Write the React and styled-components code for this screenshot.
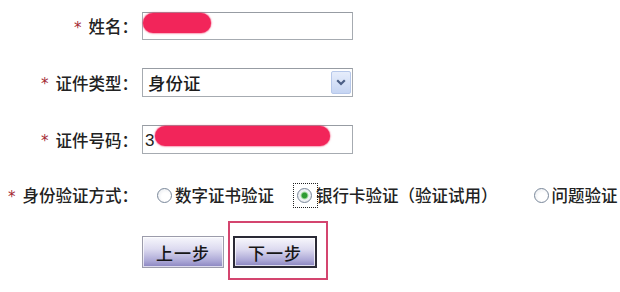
import React from "react";
import styled, { createGlobalStyle } from "styled-components";

const Global = createGlobalStyle`
  html, body { margin: 0; padding: 0; background: #fff; }
  body { font-family: "Noto Sans CJK SC", "Noto Sans", sans-serif; color: #1c1c1c; }
`;

const Form = styled.main`
  display: grid;
  grid-template-columns: 138px auto;
  column-gap: 4px;
  row-gap: 28px;
  align-items: center;
  padding-top: 12px;
  width: 620px;
`;

const Label = styled.label`
  display: flex;
  justify-content: flex-end;
  align-items: center;
  white-space: nowrap;
  font-size: 16.5px;
  font-weight: 500;
  line-height: 20px;
  color: #222;
`;

const Star = styled.span`
  font-family: "DejaVu Sans", sans-serif;
  font-size: 15px;
  line-height: 15px;
  height: 15px;
  padding-top: 4px;
  color: #a42a32;
  margin-right: 7px;
`;

const Field = styled.div`
  box-sizing: border-box;
  width: 211px;
  height: ${(p) => p.$h}px;
  border: 1px solid #a6abb1;
  border-top-color: #979ca3;
  background: #fff;
  display: flex;
  align-items: ${(p) => (p.$top ? "flex-start" : "center")};
  padding-left: ${(p) => p.$pad}px;
  font-size: 17px;
  color: #1c1c1c;
`;

const Digit = styled.span`
  font-family: "Liberation Sans", sans-serif;
  font-size: 17px;
  line-height: 20px;
  align-self: center;
  margin-top: 2px;
`;

const Redact = styled.span`
  display: inline-block;
  flex: none;
  width: ${(p) => p.$w}px;
  height: 20px;
  margin-left: ${(p) => p.$ml}px;
  border-radius: 10px;
  background: #f2255a;
  box-shadow: 0 0 1.5px 0.5px rgba(242, 37, 90, 0.7);
`;

const SelectBox = styled(Field)`
  justify-content: space-between;
`;

const SelectText = styled.span`
  line-height: 22px;
  font-size: 17.5px;
  font-weight: 500;
`;

const DropButton = styled.span`
  box-sizing: border-box;
  width: 20px;
  height: 23px;
  margin-right: 1px;
  margin-bottom: 1px;
  border: 1px solid #b7c8ea;
  border-radius: 2px;
  background: linear-gradient(#e6edfb, #c6d5f3);
  display: flex;
  align-items: center;
  justify-content: center;
`;

const RadioGroup = styled.div`
  display: flex;
  align-items: center;
  height: 26px;
  padding-left: 15px;
  white-space: nowrap;
  font-size: 16.5px;
  font-weight: 500;
  line-height: 20px;
  color: #222;
`;

const Option = styled.span`
  display: flex;
  align-items: center;
  margin-right: ${(p) => p.$mr}px;
`;

const Focus = styled.span`
  box-sizing: border-box;
  width: 25px;
  height: 25px;
  border: 1px dotted #222;
  display: flex;
  align-items: center;
  justify-content: center;
  margin-left: -5px;
  margin-right: -2px;
`;

const Radio = styled.span`
  box-sizing: border-box;
  display: block;
  width: 15px;
  height: 15px;
  border-radius: 50%;
  border: 1.5px solid #7a889a;
  background: ${(p) =>
    p.$checked
      ? "radial-gradient(circle, #2f9a33 0 2.4px, #8fd08c 3.2px, #f2f4f6 4.4px, #dde1e6 100%)"
      : "radial-gradient(circle at 60% 60%, #ffffff 0 4px, #e3e6eb 100%)"};
  margin-right: 3px;
  flex: none;
`;

const ButtonRow = styled.div`
  grid-column: 2;
  display: flex;
  align-items: center;
  gap: 9px;
  padding-bottom: 14px;
`;

const StepButton = styled.button`
  box-sizing: border-box;
  width: ${(p) => (p.$primary ? 84 : 82)}px;
  height: 32px;
  padding: 0;
  border: ${(p) => (p.$primary ? "2px solid #2a2a36" : "1px solid #9c9cab")};
  box-shadow: inset 0 0 0 1px rgba(255, 255, 255, 0.7);
  background: linear-gradient(#f7f7fc 0%, #dddbf0 40%, #aba7d6 80%, #8984c0 100%);
  font-family: "Noto Sans CJK SC", sans-serif;
  font-size: 17px;
  font-weight: 500;
  color: #161616;
  letter-spacing: 1px;
`;

const Highlight = styled.span`
  position: relative;
  display: flex;
  &::after {
    content: "";
    position: absolute;
    left: -5px;
    right: -11px;
    top: -15px;
    bottom: -12px;
    border: 2px solid #d4456f;
    pointer-events: none;
  }
`;

const Chevron = () => (
  <svg width="10" height="7" viewBox="0 0 10 7">
    <path d="M1.2 1.2 L5 5 L8.8 1.2" fill="none" stroke="#4b5f86" strokeWidth="2.2" />
  </svg>
);

export default function App() {
  return (
    <>
      <Global />
      <Form>
        <Label>
          <Star>*</Star>姓名：
        </Label>
        <Field $h={28} $pad={0} $top>
          <Redact $w={68} $ml={0} />
        </Field>

        <Label>
          <Star>*</Star>证件类型：
        </Label>
        <SelectBox $h={29} $pad={5}>
          <SelectText>身份证</SelectText>
          <DropButton>
            <Chevron />
          </DropButton>
        </SelectBox>

        <Label>
          <Star>*</Star>证件号码：
        </Label>
        <Field $h={29} $pad={2} $top>
          <Digit>3</Digit>
          <Redact $w={175} $ml={1} />
        </Field>

        <Label>
          <Star>*</Star>身份验证方式：
        </Label>
        <RadioGroup>
          <Option $mr={24}>
            <Radio />
            数字证书验证
          </Option>
          <Option $mr={36}>
            <Focus>
              <Radio $checked />
            </Focus>
            <span>银行卡验证（验证试用）</span>
          </Option>
          <Option $mr={0}>
            <Radio />
            问题验证
          </Option>
        </RadioGroup>

        <ButtonRow>
          <StepButton>上一步</StepButton>
          <Highlight>
            <StepButton $primary>下一步</StepButton>
          </Highlight>
        </ButtonRow>
      </Form>
    </>
  );
}
